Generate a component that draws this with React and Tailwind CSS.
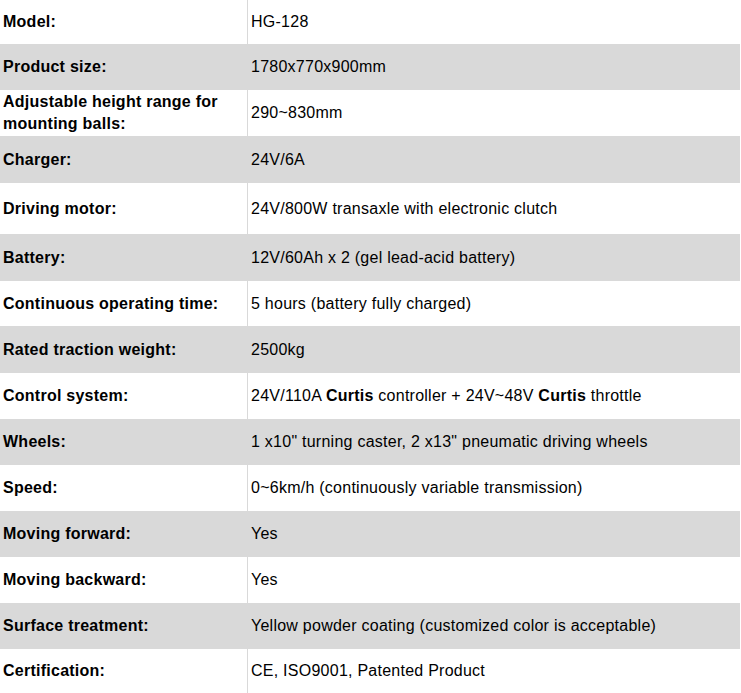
import React from 'react'

const rows = [
  { label: 'Model:', value: 'HG-128', h: 'h-[44px]' },
  { label: 'Product size:', value: '1780x770x900mm', h: 'h-[46px]' },
  { label: 'Adjustable height range for mounting balls:', value: '290~830mm', h: 'h-[46px]' },
  { label: 'Charger:', value: '24V/6A', h: 'h-[47px]' },
  { label: 'Driving motor:', value: '24V/800W transaxle with electronic clutch', h: 'h-[51px]' },
  { label: 'Battery:', value: '12V/60Ah x 2 (gel lead-acid battery)', h: 'h-[47px]' },
  { label: 'Continuous operating time:', value: '5 hours (battery fully charged)', h: 'h-[45px]' },
  { label: 'Rated traction weight:', value: '2500kg', h: 'h-[47px]' },
  {
    label: 'Control system:',
    value: (
      <span>
        24V/110A <b>Curtis</b> controller + 24V~48V <b>Curtis</b> throttle
      </span>
    ),
    h: 'h-[46px]',
  },
  { label: 'Wheels:', value: '1 x10" turning caster, 2 x13" pneumatic driving wheels', h: 'h-[46px]' },
  { label: 'Speed:', value: '0~6km/h (continuously variable transmission)', h: 'h-[46px]' },
  { label: 'Moving forward:', value: 'Yes', h: 'h-[46px]' },
  { label: 'Moving backward:', value: 'Yes', h: 'h-[46px]' },
  { label: 'Surface treatment:', value: 'Yellow powder coating (customized color is acceptable)', h: 'h-[46px]' },
  { label: 'Certification:', value: 'CE, ISO9001, Patented Product', h: 'h-[44px]' },
]

export default function App() {
  return (
    <div className="w-[741px] h-[693px] bg-white overflow-hidden font-['Liberation_Sans',Arial,sans-serif] text-[16px] tracking-[0.25px] text-black">
      <div className="w-[740px] flex flex-col">
        {rows.map((row, i) => (
          <div
            key={i}
            className={`flex ${row.h} ${i % 2 === 1 ? 'bg-[#d9d9d9]' : 'bg-white'}`}
          >
            <div className="w-[248px] shrink-0 flex items-center pl-[3px] pr-2 font-bold leading-[22px] border-r border-[#d9d9d9]">
              <span>{row.label}</span>
            </div>
            <div className="flex-1 flex items-center pl-[3px] leading-[22px]">
              <span>{row.value}</span>
            </div>
          </div>
        ))}
      </div>
    </div>
  )
}
